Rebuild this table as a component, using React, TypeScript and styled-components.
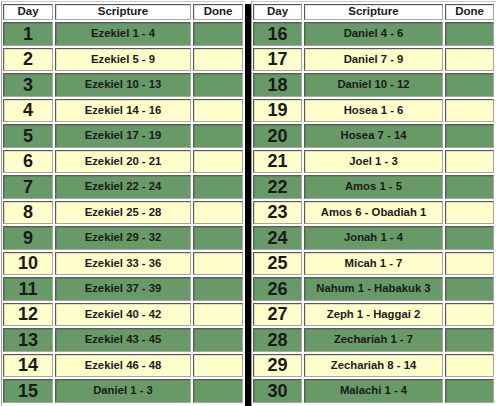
import React from 'react';
import styled, { createGlobalStyle } from 'styled-components';

const GlobalStyle = createGlobalStyle`
  html, body {
    margin: 0;
    padding: 0;
    background: #ffffff;
  }
  body {
    font-family: "Liberation Sans", Arial, sans-serif;
    color: #1a1a1a;
  }
`;

const Page = styled.div`
  display: flex;
  align-items: stretch;
  width: 496px;
  height: 406px;
  padding-top: 1px;
  padding-left: 1px;
  box-sizing: border-box;
  overflow: hidden;
`;

const Plan = styled.div<{ $cols: string }>`
  display: grid;
  grid-template-columns: ${props => props.$cols};
  grid-template-rows: 16px repeat(15, 23.5px);
  gap: 2px;
  align-content: start;
  padding: 2px 2px 0 1px;
  border-left: 1px solid #a0a0a0;
  border-top: 1px solid #c8c8c8;
`;

const Divider = styled.div`
  width: 6px;
  margin-top: 3px;
  background: #000000;
`;

const Cell = styled.div<{ $tone: 'head' | 'green' | 'yellow' }>`
  display: flex;
  align-items: center;
  justify-content: center;
  box-sizing: border-box;
  border: 1px solid;
  border-color: #5a5a5a #a6a6a6 #a6a6a6 #5a5a5a;
  box-shadow: inset 1px 1px 0 rgba(0, 0, 0, 0.12);
  background: ${props =>
    props.$tone === 'head' ? '#ffffff' : props.$tone === 'green' ? '#689a68' : '#ffffcc'};
  white-space: nowrap;
  overflow: hidden;
`;

const HeadText = styled.span`
  font-size: 11.5px;
  font-weight: bold;
  line-height: 1;
`;

const DayNum = styled.span`
  font-size: 18px;
  font-weight: bold;
  line-height: 1;
`;

const Reading = styled.span`
  font-size: 11.3px;
  font-weight: bold;
  line-height: 1;
`;

const leftReadings = [
  'Ezekiel 1 - 4',
  'Ezekiel 5 - 9',
  'Ezekiel 10 - 13',
  'Ezekiel 14 - 16',
  'Ezekiel 17 - 19',
  'Ezekiel 20 - 21',
  'Ezekiel 22 - 24',
  'Ezekiel 25 - 28',
  'Ezekiel 29 - 32',
  'Ezekiel 33 - 36',
  'Ezekiel 37 - 39',
  'Ezekiel 40 - 42',
  'Ezekiel 43 - 45',
  'Ezekiel 46 - 48',
  'Daniel 1 - 3',
];

const rightReadings = [
  'Daniel 4 - 6',
  'Daniel 7 - 9',
  'Daniel 10 - 12',
  'Hosea 1 - 6',
  'Hosea 7 - 14',
  'Joel 1 - 3',
  'Amos 1 - 5',
  'Amos 6 - Obadiah 1',
  'Jonah 1 - 4',
  'Micah 1 - 7',
  'Nahum 1 - Habakuk 3',
  'Zeph 1 - Haggai 2',
  'Zechariah 1 - 7',
  'Zechariah 8 - 14',
  'Malachi 1 - 4',
];

const ReadingTable: React.FC<{ start: number; readings: string[]; cols: string }> = ({
  start,
  readings,
  cols,
}) => (
  <Plan $cols={cols}>
    <Cell $tone="head"><HeadText>Day</HeadText></Cell>
    <Cell $tone="head"><HeadText>Scripture</HeadText></Cell>
    <Cell $tone="head"><HeadText>Done</HeadText></Cell>
    {readings.map((r, i) => {
      const tone = i % 2 === 0 ? 'green' : 'yellow';
      return (
        <React.Fragment key={r}>
          <Cell $tone={tone}><DayNum>{start + i}</DayNum></Cell>
          <Cell $tone={tone}><Reading>{r}</Reading></Cell>
          <Cell $tone={tone} />
        </React.Fragment>
      );
    })}
  </Plan>
);

export default function App() {
  return (
    <>
      <GlobalStyle />
      <Page>
        <ReadingTable start={1} readings={leftReadings} cols="50px 136px 50px" />
        <Divider />
        <ReadingTable start={16} readings={rightReadings} cols="49px 139px 49px" />
      </Page>
    </>
  );
}
